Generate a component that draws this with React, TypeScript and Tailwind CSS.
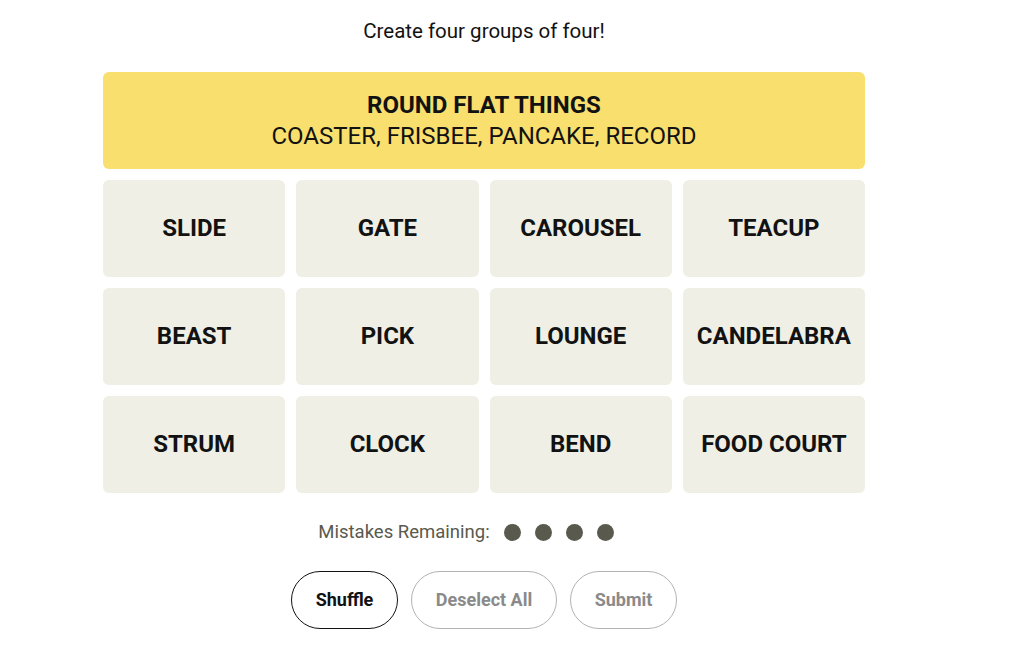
import React from "react";

const words = [
  "SLIDE", "GATE", "CAROUSEL", "TEACUP",
  "BEAST", "PICK", "LOUNGE", "CANDELABRA",
  "STRUM", "CLOCK", "BEND", "FOOD COURT",
];

export default function App() {
  return (
    <div className="min-h-[653px] w-[1024px] bg-white text-[#121212]" style={{ fontFamily: "Roboto, 'Liberation Sans', sans-serif" }}>
      <div className="ml-[103px] flex w-[762px] flex-col items-center">
        <div className="mt-[19px] h-[24px] text-[20.5px] leading-[24px]">Create four groups of four!</div>
        <div className="mt-[29px] flex h-[97px] w-full flex-col items-center justify-center rounded-[6px] bg-[#f9df6d] text-[24px] leading-[31px]">
          <div className="font-bold">ROUND FLAT THINGS</div>
          <div>COASTER, FRISBEE, PANCAKE, RECORD</div>
        </div>
        <div className="mt-[11px] grid w-full grid-cols-4 gap-[11px]">
          {words.map((w) => (
            <div key={w} className="flex h-[97px] items-center justify-center rounded-[6px] bg-[#efefe6] pb-[2px] text-[24px] font-bold">
              {w}
            </div>
          ))}
        </div>
        <div className="mt-[26px] mr-[36px] flex items-center text-[18.5px] text-[#5a594e]">
          <span>Mistakes Remaining:</span>
          <div className="ml-[14px] flex gap-[14px]">
            {[0, 1, 2, 3].map((i) => (
              <span key={i} className="h-[17px] w-[17px] rounded-full bg-[#5a594e]" />
            ))}
          </div>
        </div>
        <div className="mt-[24px] flex gap-[13px] text-[18px] font-bold">
          <button className="h-[58px] w-[107px] rounded-full border border-[#121212] text-[#121212]">Shuffle</button>
          <button className="h-[58px] w-[146px] rounded-full border border-[#b3b3b3] text-[#8a8a8a]">Deselect All</button>
          <button className="h-[58px] w-[107px] rounded-full border border-[#b3b3b3] text-[#8a8a8a]">Submit</button>
        </div>
      </div>
    </div>
  );
}
